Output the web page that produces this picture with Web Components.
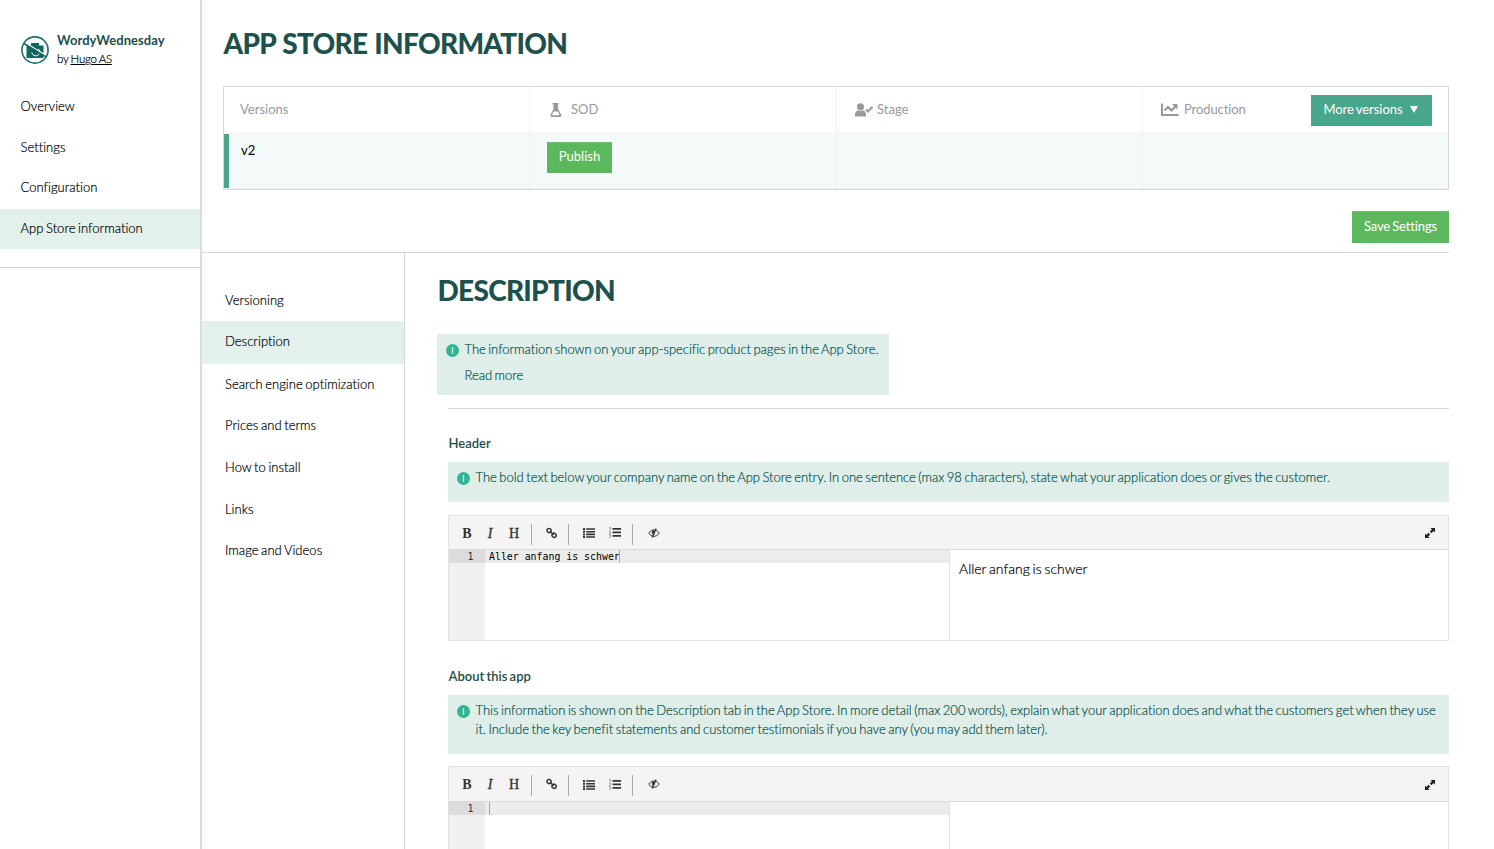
<!DOCTYPE html>
<html lang="en">
<head>
<meta charset="utf-8">
<title>App Store information</title>
<style>
html,body{margin:0;height:100%;overflow:hidden;background:#fff}
body{font-family:Lato,"Liberation Sans",sans-serif;font-size:13px;line-height:20px;color:#1a1a1a;font-variant-ligatures:none;word-spacing:-1px}
</style>
</head>
<body>
<app-shell></app-shell>
<script>
const define = (name, css, html) => customElements.define(name, class extends HTMLElement {
  constructor() {
    super();
    const attr = (k) => this.getAttribute(k) || '';
    this.attachShadow({mode: 'open'}).innerHTML =
      '<style>*{box-sizing:border-box}' + css + '</style>' + (typeof html === 'function' ? html(attr) : html);
  }
});

define('nav-item', `
:host{display:flex;align-items:center;height:var(--item-h,40px);padding-left:var(--item-pad,20.5px);padding-bottom:var(--item-pb,1.2px);white-space:nowrap;color:#000;font-weight:300;letter-spacing:.03px;-webkit-text-stroke:.2px #000}
:host([active]){background:#e3f1ec}`, '<slot></slot>');

define('app-logo', `:host{display:block;width:28px;height:28px}svg{display:block}`, `
<svg width="28" height="28" viewBox="0 0 28 28"><path fill="#11675f" d="M5.500 9.500h4.500V7h8v2.500h4.500V22h-17z"/>
<path d="M17.300 12.800A4 4 0 1 1 10.800 16.500" fill="none" stroke="#fff" stroke-width="1"/>
<path d="M3 6.200L25.500 19.800" stroke="#fff" stroke-width="1.400"/><path d="M2.500 7.300L25 20.900" stroke="#11675f" stroke-width="1.600"/>
<circle cx="14" cy="14" r="13.100" fill="none" stroke="#1d6e66" stroke-width="1.600"/></svg>`);

define('side-bar', `
:host{display:block;height:849px;border-right:2px solid #dcdcdc}
header{display:flex;gap:8px;height:86.600px;padding:36px 0 0 21px}
.t{margin-top:-5px;line-height:19px;white-space:nowrap}
b{display:block;color:#1d4f4a;font-size:13px;letter-spacing:.05px}
.by{font-size:11.500px;margin-top:-1px;font-weight:300;color:#000;word-spacing:-.4px;letter-spacing:-.28px;-webkit-text-stroke:.2px #000}
nav{display:grid;row-gap:.67px;height:181.400px;align-content:start;border-bottom:1px solid #d6d6d6}`, `
<header><app-logo></app-logo><div class="t"><b>WordyWednesday</b><div class="by">by <u>Hugo AS</u></div></div></header>
<nav><nav-item>Overview</nav-item><nav-item>Settings</nav-item><nav-item>Configuration</nav-item><nav-item active>App Store information</nav-item></nav>`);

define('ui-button', `
:host{display:flex;align-items:center;justify-content:center;height:32px;color:#fff;background:#5cb85c;border-top:1px solid #6cc06c;padding-bottom:4px;white-space:nowrap}
:host([kind=teal]){background:#48a68b;border-top-color:#48a68b;height:31px}`, '<slot></slot>');

const icons = {
  flask: '<svg width="12" height="14" viewBox="0 0 12 14"><path fill="#999" fill-rule="evenodd" d="M2.500 0h6v1.500H8v4.300l3.300 6.200q.6 2-1.300 2H1.800q-1.900 0-1.300-2L3.500 5.800V1.500H2.500zM3.600 8.500L2.200 11.300v1h7v-1L7.900 8.500z"/></svg>',
  user: '<svg width="18" height="14" viewBox="0 0 18 14"><circle cx="5.500" cy="3.800" r="3.500" fill="#999"/><path fill="#999" d="M0 13.500V11Q.5 8 3 7.300q2.500 1 5 0 2.500.7 3 3.700v2.500z"/><path d="M11 6.500l2 2L17.500 3.800" fill="none" stroke="#999" stroke-width="2"/></svg>',
  chart: '<svg width="18" height="14" viewBox="0 0 18 14"><path d="M1 .5V12h16.500" fill="none" stroke="#999" stroke-width="2"/><path d="M3.500 7.500L7 4l3.500 3.500L15 3" fill="none" stroke="#999" stroke-width="2.200"/><path fill="#999" d="M11 1h5.500v5.500z"/></svg>'
};
define('version-table', `
:host{display:grid;grid-template-columns:305px 1px 306px 1px 305px 1px 1fr;grid-template-rows:46px 1px 54px 1px;width:1226px;height:104px;border:1px solid #d5d9d8}
.h{display:flex;align-items:center;padding-left:16px;color:#999;white-space:nowrap}
.h>span{margin-top:-2px}
.h svg{display:block;flex:none;margin-top:-1px}
.v{background:#f1f2f2}.line{grid-column:1/-1;background:#f1f3f3}
.c{background:#f4fafa}
.first{display:flex;border-left:5px solid #48a68b;padding:6px 0 0 12px;color:#000}
.pub{padding:8px 0 0 17px}.pub ui-button{width:65px;height:31px}
.more{width:121px;margin:0 16px 0 auto;letter-spacing:-.05px;padding-right:2px}
.tri{width:0;height:0;border:4px solid transparent;border-top:7px solid #fff;border-bottom:0;margin:2px 0 0 7px}`, `
<div class="h"><span>Versions</span></div><div class="v"></div>
<div class="h" style="padding-left:20px;gap:9px">${icons.flask}<span>SOD</span></div><div class="v"></div>
<div class="h" style="padding-left:18px;gap:4px">${icons.user}<span>Stage</span></div><div class="v"></div>
<div class="h" style="padding-left:18px;gap:5px">${icons.chart}<span style="letter-spacing:-.1px">Production</span><ui-button class="more" kind="teal">More versions<span class="tri"></span></ui-button></div>
<div class="line"></div>
<div class="c first">v2</div><div class="v"></div><div class="c pub"><ui-button>Publish</ui-button></div><div class="v"></div><div class="c"></div><div class="v"></div><div class="c"></div>
<div class="line"></div>`);

define('page-title', `:host{display:block;font-size:28px;line-height:34px;font-weight:900;letter-spacing:-.72px;word-spacing:1px;padding-left:.5px;color:#1d524c;white-space:nowrap}`, '<slot></slot>');

define('info-note', `
:host{display:flex;gap:5.500px;background:#e0eeea;color:#06524b;font-weight:300;padding:6px 9px 0;line-height:19px;white-space:nowrap}
svg{flex:none;margin-top:4px}
div{-webkit-text-stroke:.2px #06524b}`, `
<svg width="13" height="13" viewBox="0 0 13 13"><circle cx="6.500" cy="6.500" r="6.500" fill="#30b494"/><path d="M6.500 3v7" stroke="#cdeee5" stroke-width="1.300"/></svg><div><slot></slot></div>`);

define('md-editor', `
:host{display:block;border:1px solid #e2e2e2;height:126px}
.bar{display:flex;align-items:center;height:var(--bar-h,34px);padding-top:1px;background:#f4f4f4;border-bottom:1px solid #dadada}
.bar b,.bar i{font:bold 14px/20px "Liberation Serif",serif;color:#333;width:16px;text-align:center;padding-top:1px}
.bar i{font-style:italic;font-weight:normal;-webkit-text-stroke:.35px #333}
.bar .s{width:1px;height:21px;background:#aaa;margin-top:2px}
.bar svg{display:block;flex:none;margin-top:-1px}
.body{display:grid;grid-template-columns:36px 464px 1px 1fr;height:90px}
.gut{background:#f0f0f0}.mono{font:9.88px/13px "DejaVu Sans Mono",monospace;color:#000;height:13px;word-spacing:0}
.num{background:#dcdcdc;color:#333;padding-left:18.500px}
.ln{display:flex;background:#ececec;padding-left:4px;white-space:pre}
.cur{width:1px;background:#aaa;margin-left:-.5px}
.sp{background:#e2e2e2}
.pv{padding:9px;font-size:14px;line-height:20px;color:#000;font-weight:300;-webkit-text-stroke:.2px #000}`, a => `
<div class="bar">
<b style="margin-left:10px">B</b><i style="margin-left:7px">I</i><b style="margin-left:8px;font-weight:normal;-webkit-text-stroke:.35px #333">H</b>
<span class="s" style="margin-left:9px"></span>
<svg style="margin-left:14px" width="12" height="12" viewBox="0 0 12 12" fill="none" stroke="#333" stroke-width="1.400"><rect x="1" y="1.500" width="4.200" height="4" rx="1.800" transform="rotate(40 3.100 3.500)"/><rect x="6" y="6.300" width="4.200" height="4" rx="1.800" transform="rotate(40 8.100 8.300)"/><path d="M3.800 4.200l4 3.600"/></svg>
<span class="s" style="margin-left:10px"></span>
<svg style="margin:0 0 0 14px" width="12" height="10" viewBox="0 0 12 10" fill="#333"><path d="M0 0h2v2H0zM0 2.700h2v2H0zM0 5.400h2v2H0zM0 8h2v2H0zM3.200 .2H12v1.600H3.200zM3.200 2.900H12v1.600H3.200zM3.200 5.600H12v1.600H3.200zM3.200 8.200H12v1.600H3.200z"/></svg>
<svg style="margin-left:14px" width="12" height="11" viewBox="0 0 12 11" fill="#333"><path d="M3.500 1H12v1.700H3.500zM3.500 4.500H12v1.700H3.500zM3.500 8H12v1.700H3.500z"/><path d="M.3 .8L1.300 .3V3M.2 4.300h1.200v1L.3 6.700h1.500M.2 8h1.400L1 9l.8.8L.2 10.500" fill="none" stroke="#666" stroke-width=".7"/></svg>
<span class="s" style="margin-left:11px"></span>
<svg style="margin-left:14.500px" width="12" height="10" viewBox="0 0 12 10" fill="none" stroke="#333"><path d="M.6 5.200Q3 1.800 6 1.800T11.400 5.200Q9 8.400 6 8.400T.6 5.200z" stroke-width="1"/><path d="M4 3Q3 5.500 5 7L7 2.600Q5.500 2 4 3z" fill="#333" stroke="none"/><path d="M8.200 .6L4.200 9.400" stroke-width="1.200"/></svg>
<svg style="margin:0 13px 0 auto" width="10" height="10" viewBox="0 0 10 10" fill="#222"><path d="M5.500 0H10v4.500L8.600 3.100 6.500 5.200 4.800 3.500 6.900 1.400zM4.500 10H0V5.500l1.400 1.400 2.100-2.100 1.700 1.700-2.100 2.100z"/></svg>
</div>
<div class="body"><div class="gut"><div class="mono num">1</div></div><div><div class="mono ln">${a('text')}<span class="cur"></span></div></div><div class="sp"></div><div class="pv">${a('text')}</div></div>`);

define('section-label', `:host{display:block;line-height:20px;font-weight:600;color:#1d4f4a;padding-left:.5px}`, '<slot></slot>');

define('description-panel', `
:host{display:block;padding:20px 0 0 32px}
page-title{margin-bottom:27px}
.top{width:452px;height:61px;letter-spacing:-.03px}
.form{margin-left:11px;border-top:1px solid #d6d6d6;margin-top:13px;padding-top:24px;width:1001px}
.n1{height:40px;margin:9px 0 13px;letter-spacing:-.01px}.n2{height:59px;margin:9px 0 12px}
md-editor{margin-bottom:25px}
.two{--bar-h:35px}
.r{display:block;margin-top:7px}`, `
<page-title>DESCRIPTION</page-title>
<info-note class="top"><span>The information shown on your app-specific product pages in the App Store.</span><span class="r">Read more</span></info-note>
<div class="form">
<section-label>Header</section-label>
<info-note class="n1">The bold text below your company name on the App Store entry. In one sentence (max 98 characters), state what your application does or gives the customer.</info-note>
<md-editor text="Aller anfang is schwer"></md-editor>
<section-label>About this app</section-label>
<info-note class="n2">This information is shown on the Description tab in the App Store. In more detail (max 200 words), explain what your application does and what the customers get when they use<br>it. Include the key benefit statements and customer testimonials if you have any (you may add them later).</info-note>
<md-editor class="two"></md-editor>
</div>`);

define('section-nav', `
:host{display:block;border-right:1px solid #d6d6d6;padding-top:26.500px;--item-h:41.500px;--item-pad:23px;--item-pb:1px}
nav-item[active]{--item-h:43px;--item-pb:3px}
.p{--item-pb:2px}`, `
<nav-item>Versioning</nav-item><nav-item active>Description</nav-item><nav-item>Search engine optimization</nav-item><nav-item class="p">Prices and terms</nav-item><nav-item>How to install</nav-item><nav-item>Links</nav-item><nav-item>Image and Videos</nav-item>`);

define('app-shell', `
:host{display:grid;grid-template-columns:202px 1fr;height:849px;overflow:hidden}
main{width:1247px;height:849px;overflow:hidden}
.head{height:253px;border-bottom:1px solid #d6d6d6;padding:26px 0 0 21px}
page-title{margin-bottom:26px}
.save{width:97px;margin:21px 0 0 auto;letter-spacing:-.13px}
.cols{display:grid;grid-template-columns:203px 1fr;height:596px}`, `
<side-bar></side-bar>
<main><div class="head"><page-title>APP STORE INFORMATION</page-title><version-table></version-table><ui-button class="save">Save Settings</ui-button></div>
<div class="cols"><section-nav></section-nav><description-panel></description-panel></div></main>`);
</script>
</body>
</html>
